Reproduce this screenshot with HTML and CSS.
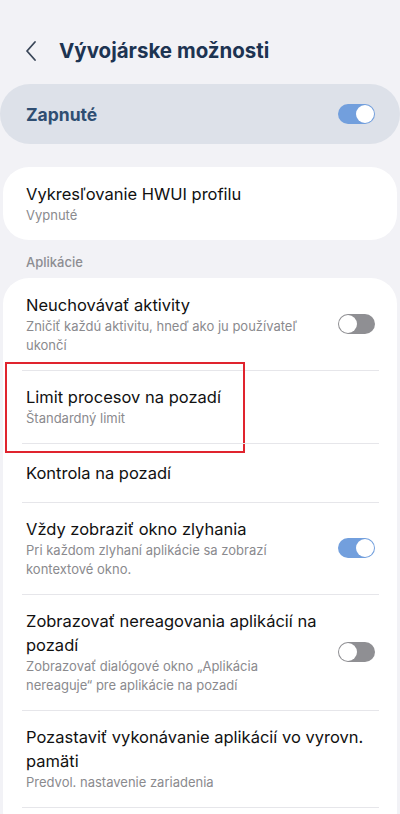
FILE: index.html
```html
<!DOCTYPE html>
<html lang="sk">
<head>
<meta charset="utf-8">
<link rel="stylesheet" href="styles.css">
</head>
<body>
<div class="screen">
  <header class="topbar">
    <svg class="back" width="14" height="22" viewBox="0 0 14 22"><path d="M11 2 L3 11 L11 20" fill="none" stroke="#3a4658" stroke-width="1.8" stroke-linecap="round" stroke-linejoin="round"/></svg>
    <h1 class="title">Vývojárske možnosti</h1>
  </header>

  <div class="master">
    <span class="master-label">Zapnuté</span>
    <span class="toggle on"><span class="knob"></span></span>
  </div>

  <div class="card">
    <div class="row">
      <div class="text">
        <div class="row-title">Vykresľovanie HWUI profilu</div>
        <div class="row-sub">Vypnuté</div>
      </div>
    </div>
  </div>

  <div class="section">Aplikácie</div>

  <div class="card list">
    <div class="row">
      <div class="text">
        <div class="row-title">Neuchovávať aktivity</div>
        <div class="row-sub">Zničiť každú aktivitu, hneď ako ju používateľ ukončí</div>
      </div>
      <span class="toggle off"><span class="knob"></span></span>
    </div>
    <div class="row">
      <div class="text">
        <div class="row-title">Limit procesov na pozadí</div>
        <div class="row-sub">Štandardný limit</div>
      </div>
      <span class="highlight"></span>
    </div>
    <div class="row single">
      <div class="text">
        <div class="row-title">Kontrola na pozadí</div>
      </div>
    </div>
    <div class="row">
      <div class="text">
        <div class="row-title">Vždy zobraziť okno zlyhania</div>
        <div class="row-sub">Pri každom zlyhaní aplikácie sa zobrazí kontextové okno.</div>
      </div>
      <span class="toggle on"><span class="knob"></span></span>
    </div>
    <div class="row">
      <div class="text">
        <div class="row-title">Zobrazovať nereagovania aplikácií na pozadí</div>
        <div class="row-sub">Zobrazovať dialógové okno „Aplikácia nereaguje“ pre aplikácie na pozadí</div>
      </div>
      <span class="toggle off"><span class="knob"></span></span>
    </div>
    <div class="row wide">
      <div class="text">
        <div class="row-title">Pozastaviť vykonávanie aplikácií vo vyrovn. pamäti</div>
        <div class="row-sub">Predvol. nastavenie zariadenia</div>
      </div>
    </div>
    <div class="row empty"></div>
  </div>
</div>
</body>
</html>
```

FILE: styles.css
```css
* { box-sizing: border-box; }
html, body { margin: 0; padding: 0; }
body {
  background: #f2f2f6;
  font-family: Inter, Roboto, "Noto Sans", sans-serif;
  width: 400px;
  height: 814px;
  overflow: hidden;
}
.screen { padding: 0 3px; }
.topbar {
  display: flex;
  align-items: center;
  height: 100px;
  padding: 0 0 0 24px;
  margin: 0 -3px;
}
.back { margin-right: 21px; margin-top: 2px; }
.title {
  margin: 0;
  font-size: 20.5px;
  font-weight: 700;
  color: #1d3452;
  letter-spacing: 0;
}
.master {
  margin: -16px -3px 0;
  height: 60px;
  border-radius: 30px;
  background: #dde1e9;
  display: flex;
  align-items: center;
  justify-content: space-between;
  padding: 0 25px 0 26px;
}
.master-label {
  font-size: 17.5px;
  font-weight: 700;
  color: #2f4e72;
}
.toggle {
  position: relative;
  flex: none;
  width: 37px;
  height: 20px;
  border-radius: 10px;
}
.toggle.on { background: #729fdd; }
.toggle.off { background: #8f8f93; }
.knob {
  position: absolute;
  top: 1px;
  width: 18px;
  height: 18px;
  border-radius: 50%;
  background: #fff;
}
.toggle.on .knob { right: 1px; }
.toggle.off .knob { left: 1px; }

.card {
  background: #fff;
  border-radius: 26px;
  margin-top: 23px;
}
.row {
  position: relative;
  display: flex;
  align-items: center;
  justify-content: space-between;
  padding: 15px 22px 15px 23px;
  min-height: 73px;
}
.list .row + .row::before {
  content: "";
  position: absolute;
  top: 0;
  left: 19px;
  right: 18px;
  height: 1px;
  background: #e6e6ea;
}
.text { max-width: 302px; }
.wide .text { max-width: 362px; }
.row-title {
  font-size: 16.5px;
  color: #111;
  line-height: 24px;
}
.row-sub {
  font-size: 13px;
  color: #8a8a8e;
  line-height: 19px;
  max-width: 290px;
}
.single { min-height: 59px; }
.empty { min-height: 20px; }
.section {
  font-size: 13px;
  font-weight: 500;
  color: #8d8d92;
  padding: 14px 0 0 23px;
  height: 38px;
}
.section + .card { margin-top: 0; }
.highlight {
  position: absolute;
  left: 2px;
  top: -8px;
  width: 240px;
  height: 91px;
  border: 2px solid #e0242e;
}
```
